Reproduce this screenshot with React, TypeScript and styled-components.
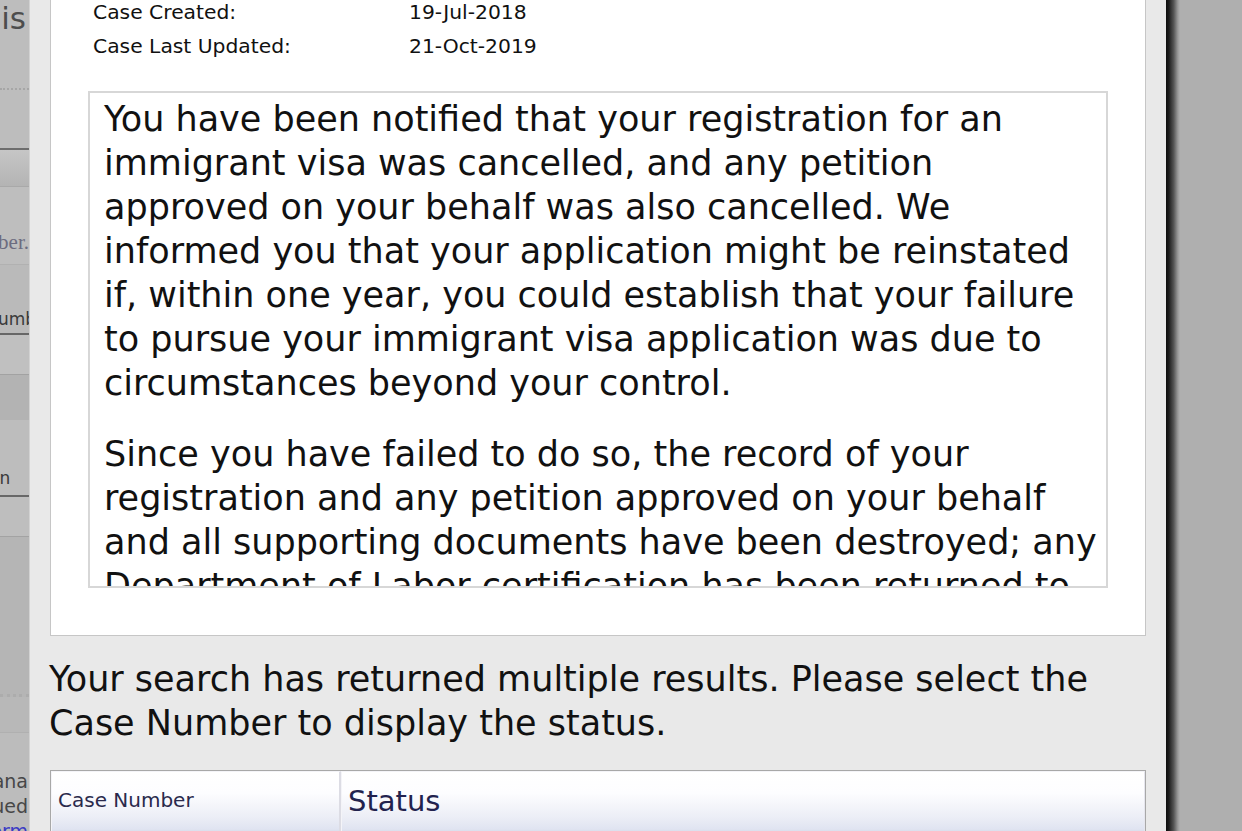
import React from "react";
import styled, { createGlobalStyle } from "styled-components";

const GlobalStyle = createGlobalStyle`
  html, body { margin: 0; padding: 0; }
  body {
    background: #afafaf;
    overflow: hidden;
    font-family: "DejaVu Sans", Verdana, sans-serif;
  }
`;

const Page = styled.div`
  display: flex;
  width: 1242px;
  height: 831px;
  overflow: hidden;
`;

/* ---------- background page seen at the left ---------- */
const BackPage = styled.div`
  width: 29px;
  flex: none;
  display: flex;
  flex-direction: column;
  overflow: hidden;
  background: #bdbdbd;
`;

const Band = styled.div<{
  $h: number;
  $bg?: string;
  $line?: string;
  $lineW?: number;
  $dotted?: boolean;
  $grad?: string;
  $align?: string;
  $justify?: string;
  $pad?: string;
}>`
  height: ${(p) => p.$h}px;
  flex: none;
  box-sizing: border-box;
  background: ${(p) => p.$grad ?? p.$bg ?? "#bdbdbd"};
  border-bottom: ${(p) => (p.$line ? `${p.$lineW ?? 1}px ${p.$dotted ? "dotted" : "solid"} ${p.$line}` : "none")};
  display: flex;
  flex-direction: column;
  justify-content: ${(p) => p.$justify ?? "flex-end"};
  align-items: ${(p) => p.$align ?? "flex-end"};
  padding: ${(p) => p.$pad ?? "0"};
  overflow: hidden;
  white-space: nowrap;
`;

const BigWord = styled.span`
  font-family: "DejaVu Sans", sans-serif;
  font-size: 31px;
  line-height: 36px;
  color: #4d4d4d;
  margin-right: 3px;
`;

const SerifWord = styled.span`
  font-family: "Liberation Serif", serif;
  font-size: 21px;
  line-height: 24px;
  color: #6c6c80;
`;

const InputWord = styled.span<{ $shift?: number }>`
  font-family: "DejaVu Sans", sans-serif;
  font-size: 17px;
  line-height: 24px;
  color: #3a3a3a;
  margin-left: ${(p) => p.$shift ?? 0}px;
`;

const SmallWord = styled.span<{ $blue?: boolean }>`
  font-family: "DejaVu Sans", sans-serif;
  font-size: 19px;
  line-height: 25px;
  color: ${(p) => (p.$blue ? "#3b3bc4" : "#474747")};
  margin-right: 1px;
`;

/* ---------- modal ---------- */
const Modal = styled.div`
  width: 1137px;
  flex: none;
  box-sizing: border-box;
  background: #e9e9e9;
  border-left: 1px solid #d2d2d2;
  padding: 0 20px 0 20px;
  display: flex;
  flex-direction: column;
`;

const Shadow = styled.div`
  width: 14px;
  flex: none;
  background: linear-gradient(to right, #0d0d0d 0%, #1c1c1c 20%, #555 55%, #9a9a9a 85%, #afafaf 100%);
`;

const Card = styled.div`
  background: #fff;
  border: 1px solid #c6c6c6;
  border-top: none;
  padding: 0 37px 47px 37px;
  display: flex;
  flex-direction: column;
`;

const InfoList = styled.div`
  display: flex;
  flex-direction: column;
  gap: 10px;
  padding-left: 5px;
`;

const InfoRow = styled.div`
  display: grid;
  grid-template-columns: 316px 1fr;
  font-size: 20.3px;
  line-height: 24px;
  color: #111;
`;

const NoticeBox = styled.div`
  margin-top: 33px;
  height: 497px;
  box-sizing: border-box;
  border: 2px solid #d7d7d7;
  padding: 4px 10px 0 14px;
  overflow: hidden;
`;

const NoticePara = styled.p`
  margin: 0 0 27px 0;
  font-size: 35px;
  line-height: 44px;
  color: #111;
  white-space: nowrap;
`;

const Prompt = styled.p`
  margin: 21px 0 0 -1px;
  font-size: 35px;
  line-height: 44px;
  color: #111;
  white-space: nowrap;
`;

const ResultTable = styled.div`
  margin-top: 25px;
  display: grid;
  grid-template-columns: 290px 1fr;
  border: 1px solid #a8a8a8;
  border-bottom: none;
  background: #fff;
`;

const HeadCell = styled.div<{ $big?: boolean }>`
  height: 62px;
  box-sizing: border-box;
  border: 1px solid #f4f4f8;
  border-right: ${(p) => (p.$big ? "1px solid #e6e6ee" : "2px solid #dcdce4")};
  background: linear-gradient(to bottom, #ffffff 0%, #fdfdff 35%, #eceef6 75%, #e0e4f1 95%, #d8dcea 100%);
  padding: 0 6px;
  display: flex;
  align-items: flex-start;
  padding-top: ${(p) => (p.$big ? "12px" : "15px")};
  font-size: ${(p) => (p.$big ? "29px" : "20px")};
  line-height: ${(p) => (p.$big ? "34px" : "26px")};
  color: ${(p) => (p.$big ? "#22224e" : "#2a2a4c")};
`;

export default function App() {
  return (
    <>
      <GlobalStyle />
      <Page>
        <BackPage>
          <Band $h={90} $bg="#bdbdbd" $line="#a6a6a6" $lineW={2} $dotted $justify="flex-start">
            <BigWord>is</BigWord>
          </Band>
          <Band $h={60} $bg="#bdbdbd" $line="#6d6d6d" $lineW={2} />
          <Band $h={37} $grad="linear-gradient(#c6c6c6, #b4b4b4)" $line="#a9a9a9" />
          <Band $h={78} $bg="#bebebe" $line="#b1b1b1" $pad="0 0 10px 0">
            <SerifWord>ber.</SerifWord>
          </Band>
          <Band $h={70} $bg="#bababa" $line="#676767" $lineW={2} $align="flex-start" $pad="0 0 2px 0">
            <InputWord $shift={-2}>umber</InputWord>
          </Band>
          <Band $h={40} $bg="#c0c0c0" $line="#a2a2a2" />
          <Band $h={45} $bg="#b3b3b3" />
          <Band $h={77} $bg="#bdbdbd" $line="#676767" $lineW={2} $align="flex-start" $pad="0 0 5px 0">
            <InputWord $shift={-11}>on</InputWord>
          </Band>
          <Band $h={40} $bg="#bebebe" $line="#a3a3a3" />
          <Band $h={160} $bg="#b5b5b5" $line="#acacac" $lineW={3} $dotted />
          <Band $h={36} $bg="#b8b8b8" $line="#b0b0b0" />
          <Band $h={98} $bg="#bcbcbc" $justify="flex-start" $pad="36px 0 0 0">
            <SmallWord>ana</SmallWord>
            <SmallWord>ued</SmallWord>
            <SmallWord $blue>orm</SmallWord>
          </Band>
        </BackPage>

        <Modal>
          <Card>
            <InfoList>
              <InfoRow>
                <span>Case Created:</span>
                <span>19-Jul-2018</span>
              </InfoRow>
              <InfoRow>
                <span>Case Last Updated:</span>
                <span>21-Oct-2019</span>
              </InfoRow>
            </InfoList>
            <NoticeBox>
              <NoticePara>
                You have been notified that your registration for an<br />
                immigrant visa was cancelled, and any petition<br />
                approved on your behalf was also cancelled. We<br />
                informed you that your application might be reinstated<br />
                if, within one year, you could establish that your failure<br />
                to pursue your immigrant visa application was due to<br />
                circumstances beyond your control.
              </NoticePara>
              <NoticePara>
                Since you have failed to do so, the record of your<br />
                registration and any petition approved on your behalf<br />
                and all supporting documents have been destroyed; any<br />
                Department of Labor certification has been returned to<br />
                the Department of Labor.
              </NoticePara>
            </NoticeBox>
          </Card>
          <Prompt>
            Your search has returned multiple results. Please select the<br />
            Case Number to display the status.
          </Prompt>
          <ResultTable>
            <HeadCell>Case Number</HeadCell>
            <HeadCell $big>Status</HeadCell>
          </ResultTable>
        </Modal>
        <Shadow />
      </Page>
    </>
  );
}
